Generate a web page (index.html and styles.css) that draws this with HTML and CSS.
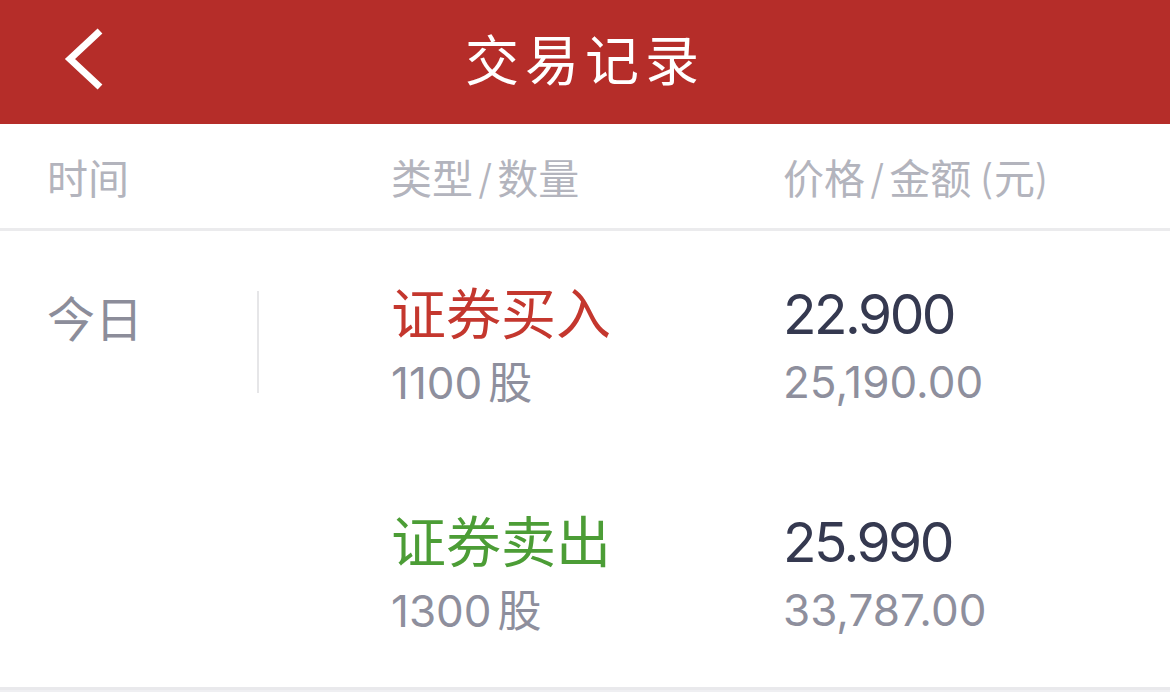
FILE: index.html
```html
<!DOCTYPE html>
<html lang="zh-CN">
<head>
  <meta charset="UTF-8">
  <meta name="viewport" content="width=device-width, initial-scale=1.0">
  <title>交易记录</title>
  <link rel="stylesheet" href="styles.css">
</head>
<body>
  <header class="nav">
    <a class="nav-back" href="#" aria-label="返回">
      <svg width="40" height="62" viewBox="0 0 40 62">
        <polyline points="36,3 6,31 36,59" fill="none" stroke="#fff" stroke-width="7"/>
      </svg>
    </a>
    <h1>交易记录</h1>
  </header>

  <div class="table-head">
    <div class="col-time">时间</div>
    <div class="col-type">类型<span class="slash">/</span>数量</div>
    <div class="col-price">价格<span class="slash">/</span>金额<span class="paren">(元)</span></div>
  </div>

  <div class="day-group">
    <div class="col-time day-label">
      <span>今日</span>
      <i class="day-line"></i>
    </div>
    <div class="trades">
      <div class="trade">
        <div class="col-type">
          <p class="trade-kind buy">证券买入</p>
          <p class="trade-qty">1100<span class="unit">股</span></p>
        </div>
        <div class="col-price">
          <p class="trade-price">22.900</p>
          <p class="trade-amount">25,190.00</p>
        </div>
      </div>
      <div class="trade">
        <div class="col-type">
          <p class="trade-kind sell">证券卖出</p>
          <p class="trade-qty">1300<span class="unit">股</span></p>
        </div>
        <div class="col-price">
          <p class="trade-price">25.990</p>
          <p class="trade-amount">33,787.00</p>
        </div>
      </div>
    </div>
  </div>
</body>
</html>
```

FILE: styles.css
```css
/* Global */
body {
  margin: 0;
  padding: 0;
  background-color: #efeff2;
  font-family: 'Noto Sans CJK SC', sans-serif;
}

p {
  margin: 0;
}

/* Nav bar */
.nav {
  position: relative;
  height: 124px;
  background-color: #b52d29;
  display: flex;
  align-items: center;
  justify-content: center;
}

.nav h1 {
  margin: 0 0 8px;
  color: #fff;
  font-size: 54px;
  font-weight: 400;
  letter-spacing: 6px;
  line-height: 1;
}

.nav-back {
  position: absolute;
  left: 64px;
  top: 28px;
  display: block;
}

.nav-back svg {
  display: block;
}

/* Columns */
.col-time {
  width: 344px;
  padding-left: 47px;
  flex-shrink: 0;
}

.col-type {
  width: 392px;
  flex-shrink: 0;
}

.col-price {
  flex: 1;
}

/* Table head */
.table-head {
  display: flex;
  align-items: center;
  height: 104px;
  background-color: #fff;
  border-bottom: 3px solid #ebebed;
  color: #b3b4bd;
  font-size: 41px;
}

.slash {
  font-family: 'Inter', sans-serif;
  font-weight: 300;
  margin: 0 5px;
}

.paren {
  font-family: 'Inter', sans-serif;
  font-weight: 300;
  margin-left: 8px;
}

/* Day group */
.day-group {
  display: flex;
  background-color: #fff;
  border-bottom: 3px solid #e9e9ec;
}

.day-label {
  display: flex;
  align-items: flex-start;
  padding-top: 58px;
  color: #8c8d9a;
  font-size: 48px;
  line-height: 54px;
}

.day-label span {
  width: 210px;
}

.day-line {
  display: block;
  width: 2px;
  height: 102px;
  margin-top: 2px;
  background-color: #e6e6e8;
}

.trades {
  flex: 1;
}

.trade {
  display: flex;
  height: 228px;
  box-sizing: border-box;
  padding-top: 46px;
}

.trade .col-price {
  padding-top: 4px;
}

.trade-kind {
  font-size: 55px;
  line-height: 66px;
}

.trade-kind.buy {
  color: #c4372e;
}

.trade-kind.sell {
  color: #4c9d36;
}

.trade-qty {
  margin-top: 11px;
  color: #8e8f9d;
  font-family: 'Inter', 'Noto Sans CJK SC', sans-serif;
  font-size: 44px;
  line-height: 52px;
}

.trade-qty .unit {
  font-family: 'Noto Sans CJK SC', sans-serif;
  margin-left: 6px;
}

.trade-price {
  color: #353950;
  font-family: 'Inter', sans-serif;
  font-size: 55px;
  line-height: 66px;
  letter-spacing: -2.5px;
}

.trade-amount {
  margin-top: 9px;
  color: #8e8f9d;
  font-family: 'Inter', sans-serif;
  font-size: 44px;
  line-height: 52px;
}
```
